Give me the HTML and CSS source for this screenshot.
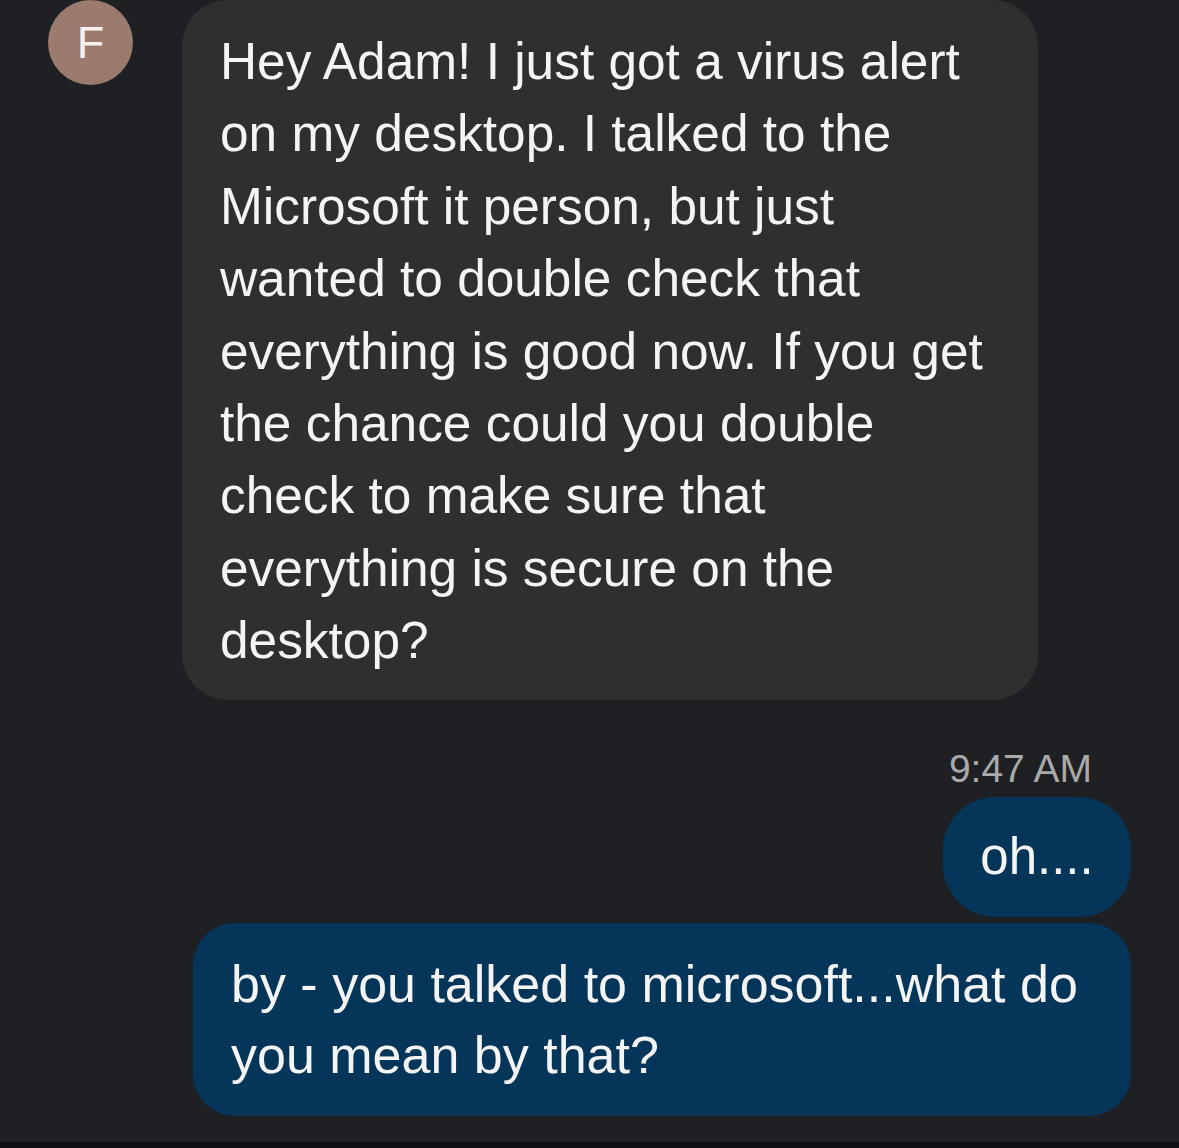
FILE: index.html
```html
<!DOCTYPE html>
<html lang="en">
<head>
    <meta charset="UTF-8">
    <meta name="viewport" content="width=device-width, initial-scale=1.0">
    <title>Messages</title>
    <link rel="stylesheet" href="styles.css">
</head>
<body>
    <div class="thread">
        <div class="incoming">
            <div class="avatar">F</div>
            <div class="bubble bubble-in">Hey Adam! I just got a virus alert on my desktop. I talked to the Microsoft it person, but just wanted to double check that everything is good now. If you get the chance could you double check to make sure that everything is secure on the desktop?</div>
        </div>

        <div class="time">9:47 AM</div>

        <div class="outgoing">
            <div class="bubble bubble-out short">oh....</div>
            <div class="bubble bubble-out long">by - you talked to microsoft...what do you mean by that?</div>
        </div>
    </div>
    <div class="bottom-bar"></div>
</body>
</html>
```

FILE: styles.css
```css
body {
    margin: 0;
    padding: 0;
    background-color: #1f2024;
    font-family: 'Liberation Sans', Arial, sans-serif;
    color: #f4f4f4;
    height: 1148px;
    display: flex;
    flex-direction: column;
    overflow: hidden;
}

.thread {
    flex: 1;
    display: flex;
    flex-direction: column;
}

.incoming {
    display: flex;
    align-items: flex-start;
}

.avatar {
    width: 85px;
    height: 85px;
    margin-left: 48px;
    margin-right: 49px;
    border-radius: 50%;
    background-color: #9b7b6e;
    color: #f6f0ec;
    font-size: 45px;
    display: flex;
    justify-content: center;
    align-items: center;
}

.bubble {
    box-sizing: border-box;
}

.bubble-in {
    width: 856px;
    padding: 25px 40px 23px 38px;
    background-color: #2f2f2f;
    border-radius: 46px;
    font-size: 51.4px;
    line-height: 72.4px;
}

.time {
    margin-top: 46px;
    padding-right: 87px;
    text-align: right;
    font-size: 39px;
    line-height: 46px;
    color: #a9a9a9;
}

.outgoing {
    margin-top: 5px;
    margin-right: 48px;
    display: flex;
    flex-direction: column;
    align-items: flex-end;
    gap: 6px;
}

.bubble-out {
    background-color: #053559;
}

.short {
    width: 188px;
    height: 120px;
    border-radius: 52px;
    font-size: 51px;
    display: flex;
    justify-content: center;
    align-items: center;
}

.long {
    width: 938px;
    padding: 26px 30px 25px 38px;
    border-radius: 42px;
    font-size: 52px;
    line-height: 71px;
}

.bottom-bar {
    height: 6px;
    background-color: #0e1014;
}
```
